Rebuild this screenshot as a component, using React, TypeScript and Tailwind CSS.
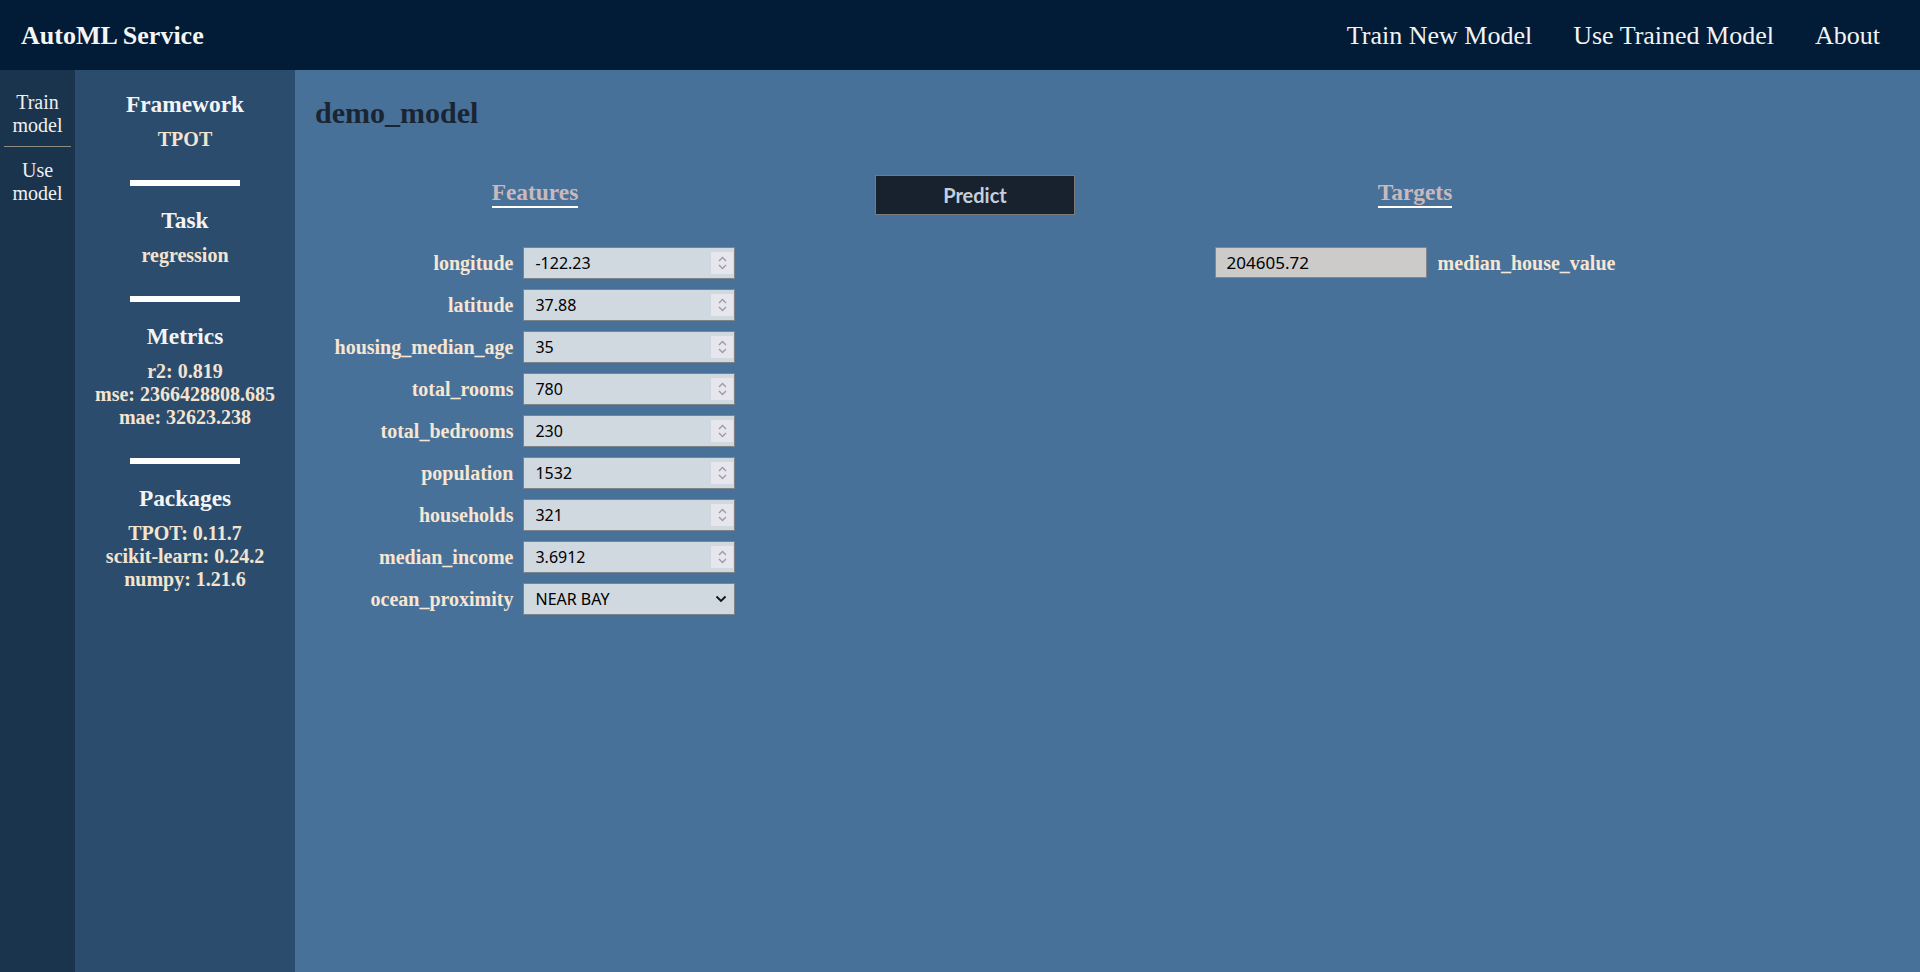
import React from 'react';

type Feature = { name: string; value: string };

const features: Feature[] = [
  { name: 'longitude', value: '-122.23' },
  { name: 'latitude', value: '37.88' },
  { name: 'housing_median_age', value: '35' },
  { name: 'total_rooms', value: '780' },
  { name: 'total_bedrooms', value: '230' },
  { name: 'population', value: '1532' },
  { name: 'households', value: '321' },
  { name: 'median_income', value: '3.6912' },
];

const sections = [
  { title: 'Framework', lines: ['TPOT'] },
  { title: 'Task', lines: ['regression'] },
  { title: 'Metrics', lines: ['r2: 0.819', 'mse: 2366428808.685', 'mae: 32623.238'] },
  { title: 'Packages', lines: ['TPOT: 0.11.7', 'scikit-learn: 0.24.2', 'numpy: 1.21.6'] },
];

const Spinner = () => (
  <div className="w-[22px] h-[22px] mr-[1px] bg-[#e6e6ec] flex flex-col items-center justify-center gap-[2px]">
    <svg width="9" height="6" viewBox="0 0 9 6" fill="none">
      <path d="M1 5 L4.5 1.5 L8 5" stroke="#9a9aab" strokeWidth="1.3" />
    </svg>
    <svg width="9" height="6" viewBox="0 0 9 6" fill="none">
      <path d="M1 1 L4.5 4.5 L8 1" stroke="#9a9aab" strokeWidth="1.3" />
    </svg>
  </div>
);

const NumberField = ({ value }: { value: string }) => (
  <div className="w-[212px] h-[32px] flex items-center border border-[#7d838b] bg-[#d0d8e0]">
    <input
      type="text"
      defaultValue={value}
      className="flex-1 min-w-0 bg-transparent pl-[11px] outline-none text-[16px] text-black font-['Noto_Sans',sans-serif]"
    />
    <Spinner />
  </div>
);

const SelectField = () => (
  <div className="w-[212px] h-[32px] flex items-center border border-[#7d838b] bg-[#d0d8e0]">
    <select
      defaultValue="NEAR BAY"
      className="flex-1 min-w-0 h-full appearance-none bg-transparent pl-[11px] outline-none text-[16px] text-black font-['Noto_Sans',sans-serif]"
    >
      <option>NEAR BAY</option>
      <option>INLAND</option>
      <option>NEAR OCEAN</option>
      <option>&lt;1H OCEAN</option>
      <option>ISLAND</option>
    </select>
    <svg width="12" height="8" viewBox="0 0 12 8" fill="none" className="mr-[7px]">
      <path d="M1.5 1.5 L6 6 L10.5 1.5" stroke="#111" strokeWidth="1.8" />
    </svg>
  </div>
);

const App: React.FC = () => {
  return (
    <div className="min-h-screen flex flex-col bg-[#48719a] font-['Liberation_Serif',serif]">
      <header className="h-[70px] shrink-0 bg-[#021c37] flex items-center justify-between pl-[21px] pr-[40px]">
        <h1 className="text-[26px] font-bold text-[#f5f5f5]">AutoML Service</h1>
        <nav className="flex gap-[41px] text-[26px] text-[#f3f3f3]">
          <a href="#">Train New Model</a>
          <a href="#">Use Trained Model</a>
          <a href="#">About</a>
        </nav>
      </header>

      <div className="flex flex-1">
        <aside className="w-[75px] shrink-0 bg-[#1b344e] text-center text-[20px] leading-[23px] text-[#f0f0f0]">
          <a href="#" className="block pt-[21px] pb-[9px] mx-[4px] border-b border-[#8c8b84]">
            Train
            <br />
            model
          </a>
          <a href="#" className="block pt-[12px] mx-[4px]">
            Use
            <br />
            model
          </a>
        </aside>

        <aside className="w-[220px] shrink-0 bg-[#2b4c6d] flex flex-col items-center pt-[21px] text-center">
          {sections.map((s, i) => (
            <div key={s.title} className="flex flex-col items-center">
              <h3 className="text-[23.4px] leading-[27px] font-bold text-[#f4f4f4]">{s.title}</h3>
              <div className="mt-[10px] text-[20px] leading-[23px] font-bold text-[#f3e4d0]">
                {s.lines.map((l) => (
                  <div key={l}>{l}</div>
                ))}
              </div>
              {i < sections.length - 1 && (
                <div className="w-[110px] h-[6px] bg-white mt-[29px] mb-[21px]" />
              )}
            </div>
          ))}
        </aside>

        <main className="flex-1 pl-[20px] pt-[26px]">
          <h2 className="text-[30px] leading-[34.5px] font-bold text-[#1a2533]">demo_model</h2>

          <div className="flex mt-[44.5px]">
            <section className="w-[440px] flex flex-col items-center">
              <h3 className="mt-[4px] text-[23.4px] leading-[27px] font-bold text-[#c9b9bd] border-b-2 border-white">
                Features
              </h3>
              <div className="mt-[39px] grid grid-cols-[auto_212px] gap-x-[10px] gap-y-[10px] items-center">
                {features.map((f) => (
                  <React.Fragment key={f.name}>
                    <label className="text-right text-[20px] font-bold text-[#f6e6d2]">{f.name}</label>
                    <NumberField value={f.value} />
                  </React.Fragment>
                ))}
                <label className="text-right text-[20px] font-bold text-[#f6e6d2]">ocean_proximity</label>
                <SelectField />
              </div>
            </section>

            <section className="w-[440px] flex flex-col items-center">
              <button className="w-[200px] h-[40px] bg-[#18222f] border border-[#7a7a7a] text-[20px] font-bold text-[#c5cfdc] font-['Lato',sans-serif]">
                Predict
              </button>
            </section>

            <section className="w-[440px] flex flex-col items-center">
              <h3 className="mt-[4px] text-[23.4px] leading-[27px] font-bold text-[#c9b9bd] border-b-2 border-white">
                Targets
              </h3>
              <div className="mt-[39px] flex items-center gap-[11px]">
                <input
                  type="text"
                  readOnly
                  value="204605.72"
                  className="w-[212px] h-[31px] border border-[#84868a] bg-[#cccbca] pl-[11px] outline-none text-[17px] text-black font-['Noto_Sans',sans-serif]"
                />
                <span className="text-[20px] font-bold text-[#f6e6d2]">median_house_value</span>
              </div>
            </section>
          </div>
        </main>
      </div>
    </div>
  );
};

export default App;
